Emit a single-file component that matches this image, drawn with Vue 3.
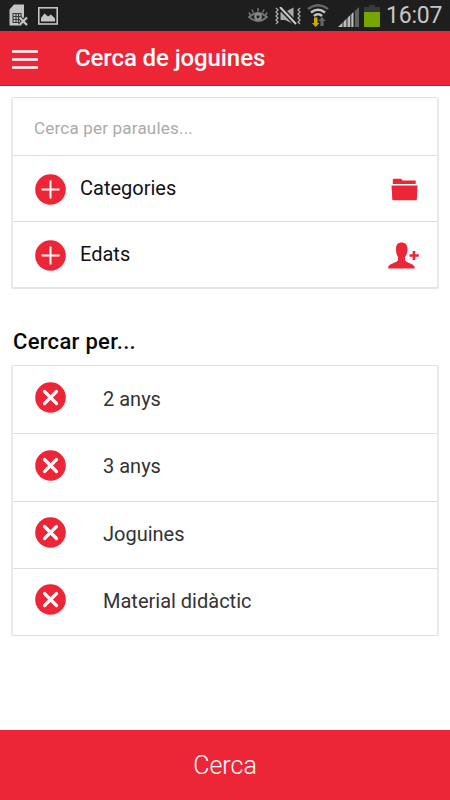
<script setup>
const filters = [
  { label: 'Categories', icon: 'folder' },
  { label: 'Edats', icon: 'person' },
]
const selected = ['2 anys', '3 anys', 'Joguines', 'Material didàctic']
</script>

<template>
  <div class="screen">
    <div class="status">
      <svg class="sim" width="19" height="23" viewBox="0 0 19 23">
        <path d="M.5 5.500 5 .5h10v13l3 8H.5z" fill="#c4c4c4" />
        <path d="M4 9.500h8v9H4zM4 12.500h8M4 15.500h8M7 9.500v9M9.500 9.500v9" fill="none" stroke="#3a3a3a" stroke-width="1.1" />
        <path d="M16 9.500V14h3v8h-7z" fill="#1e1e1e" />
        <path d="m10.500 13.500 7.500 7.500m0-7.500-7.500 7.500" stroke="#333" stroke-width="4" />
        <path d="m10.500 13.500 7.500 7.500m0-7.500-7.500 7.500" stroke="#c8c8c8" stroke-width="2" />
      </svg>
      <svg class="image" width="20" height="18" viewBox="0 0 20 18">
        <rect x=".8" y=".8" width="18.400" height="16.200" fill="none" stroke="#c4c4c4" stroke-width="1.600" />
        <path d="M3 14.500V11l3.500-4.500L10 9.500l3-2 4 4v3z" fill="#c4c4c4" />
      </svg>
      <span class="spacer"></span>
      <svg class="eye" width="20" height="17" viewBox="0 0 20 17">
        <path d="M1 10Q10 2 19 10 10 18 1 10z" fill="none" stroke="#747474" stroke-width="1.800" />
        <circle cx="10" cy="9.700" r="2.700" fill="none" stroke="#888" stroke-width="2.400" />
        <path d="M10 4.500V1M5.500 5.500 3.800 2.500m10.700 3 1.700-3M2.500 8 .8 5.500M17.500 8l1.700-2.500" stroke="#747474" stroke-width="1.500" />
      </svg>
      <svg class="mute" width="26" height="18" viewBox="0 0 26 18">
        <path d="M5.500 5H10l8.500-4.500V17L10 13H5.500z" fill="#aaa" />
        <path d="m5 0 16 17" stroke="#1e1e1e" stroke-width="5" />
        <path d="m5 0 16 17" stroke="#ccc" stroke-width="2" />
        <path d="m1 1 2 2-2 2 2 2-2 2 2 2-2 2 2 2-2 2M25 1l-2 2 2 2-2 2 2 2-2 2 2 2-2 2 2 2" fill="none" stroke="#aaa" stroke-width="1.300" />
      </svg>
      <svg class="wifi" width="22" height="24" viewBox="0 0 22 24">
        <path d="M1 5Q11-2.500 21 5" fill="none" stroke="#666" stroke-width="2.500" />
        <path d="M4 8.500Q11 3 18 8.500M7 12Q11 8.500 15 12" fill="none" stroke="#c6c6c6" stroke-width="2.600" />
        <path d="M7 13.500h3.500V19h2L8.700 23l-3.800-4H7z" fill="#d5a800" />
        <path d="m15 13 3.800 4h-2.200v5h-3.200v-5h-2.200z" fill="#666" />
      </svg>
      <svg class="signal" width="21" height="20" viewBox="0 0 21 20">
        <path d="M0 20 15.500 5v15z" fill="#bdbdbd" />
        <path d="M17 4 21 0v20h-4z" fill="#606060" />
        <path d="M5 13v7M9 10v10M12.800 6v14M16.500 3v17" stroke="#242424" stroke-width="1" />
      </svg>
      <svg class="battery" width="16" height="22" viewBox="0 0 16 22">
        <path d="M5 0h6v2h5v20H0V2h5z" fill="#383b35" />
        <path d="M0 7h16v15H0z" fill="#76a500" />
      </svg>
      <span class="time">16:07</span>
    </div>
    <header class="header">
      <svg class="menu" width="26" height="19" viewBox="0 0 26 19">
        <path d="M0 1.500h26M0 9.500h26M0 17.500h26" stroke="#fff" stroke-width="2.700" />
      </svg>
      <h1>Cerca de joguines</h1>
    </header>
    <main>
      <section class="card search">
        <div class="keywords">Cerca per paraules...</div>
        <div v-for="item in filters" :key="item.label" class="filter">
          <svg width="31" height="31" viewBox="0 0 31 31">
            <circle cx="15.500" cy="15.500" r="15.300" fill="#ed2637" />
            <path d="M15.500 6.500v18M6.500 15.500h18" stroke="#fff" stroke-width="2" />
          </svg>
          <span class="label">{{ item.label }}</span>
          <svg v-if="item.icon === 'folder'" class="folder" width="27" height="23" viewBox="0 0 27 23">
            <path d="M1.800 6V2Q1.800.7 3.200.7h6.500Q11 .7 11.500 2.500h13.200V6z" fill="#ed2637" />
            <path d="M.5 7.500h26l-.7 14q-.1.8-1 .8H2.300q-.9 0-1-.8z" fill="#ed2637" />
          </svg>
          <svg v-else class="person" width="31" height="27" viewBox="0 0 31 27">
            <path d="M8 7C8 2.500 10 .5 13.500.5S19.500 2.500 19.500 7c0 4-1.500 6.500-2.500 8v3c0 2 8 3.500 9.500 6.500v2H.3v-2C1.500 21.500 10 20 10 18v-3C9 13.500 8 11 8 7z" fill="#ed2637" />
            <path d="M26 9v9M21.500 13.500h9.300" stroke="#ed2637" stroke-width="2.600" />
          </svg>
        </div>
      </section>
      <h2>Cercar per...</h2>
      <section class="card chosen">
        <div v-for="item in selected" :key="item" class="choice">
          <svg width="31" height="31" viewBox="0 0 31 31">
            <circle cx="15.500" cy="15.500" r="15.300" fill="#ed2637" />
            <path d="m9.500 9.500 12 12m0-12-12 12" stroke="#fff" stroke-width="3.200" stroke-linecap="round" />
          </svg>
          <span>{{ item }}</span>
        </div>
      </section>
    </main>
    <button class="submit">Cerca</button>
  </div>
</template>

<style>
body { background: #fff; }
</style>

<style scoped>
* { box-sizing: border-box; }
svg { flex: none; display: block; }
.screen {
  width: 450px;
  height: 800px;
  display: flex;
  flex-direction: column;
  overflow: hidden;
  background: #fff;
  font-family: Roboto, sans-serif;
}
.status {
  height: 31px;
  flex: none;
  display: flex;
  align-items: flex-start;
  background: #1e1e1e;
  padding: 0 8px 0 9px;
}
.sim { margin-top: 4px; }
.image { margin: 7px 0 0 10px; }
.spacer { flex: 1; }
.eye { margin: 7px 7px 0 0; }
.mute { margin: 7px 6px 0 0; }
.wifi { margin: 4px 9px 0 0; }
.signal { margin: 7px 5px 0 0; }
.battery { margin: 5px 6px 0 0; }
.time {
  width: 56px;
  color: #c6c6c6;
  font-size: 23px;
  line-height: 31px;
  letter-spacing: -.2px;
  white-space: nowrap;
}
.header {
  height: 55px;
  flex: none;
  display: flex;
  align-items: center;
  background: #ed2637;
  border-bottom: 1px solid #e01225;
  padding: 0 12px;
}
.menu { margin-top: 2px; }
h1 {
  margin: 0 0 0 37px;
  color: #fff;
  font-size: 24px;
  line-height: 30px;
  font-weight: 500;
  letter-spacing: -.1px;
}
main { flex: 1; padding: 11px 11px 0; }
.card {
  border: 1px solid #e0e0e0;
  border-left: 2px solid #e9e9e9;
  border-right: 2px solid #e9e9e9;
  border-radius: 2px;
}
.search { height: 192px; border-bottom: 2px solid #e6e6e6; }
.keywords {
  height: 57px;
  padding-left: 21px;
  color: #aaa;
  font-size: 17px;
  line-height: 60px;
  letter-spacing: .2px;
}
.filter {
  height: 66px;
  border-top: 1px solid #dedede;
  display: flex;
  align-items: center;
  padding: 1px 18px 0 22px;
}
.label { flex: 1; margin: -2px 0 0 14px; color: #111; font-size: 20px; }
.folder { margin-right: 1px; }
h2 {
  margin: 37px 0 0 2px;
  color: #080808;
  font-size: 22px;
  line-height: 32px;
  font-weight: 500;
  letter-spacing: .3px;
}
.chosen { height: 271px; margin-top: 7px; display: flex; flex-direction: column; }
.choice {
  height: 67.500px;
  display: flex;
  align-items: center;
  padding: 0 22px 4px;
  color: #333;
  font-size: 20px;
}
.choice + .choice { border-top: 1px solid #dedede; }
.choice span { margin: 2px 0 0 37px; }
.submit {
  height: 70px;
  flex: none;
  border: 0;
  background: #ed2637;
  color: #fff;
  font: 300 25px Roboto, sans-serif;
}
</style>
